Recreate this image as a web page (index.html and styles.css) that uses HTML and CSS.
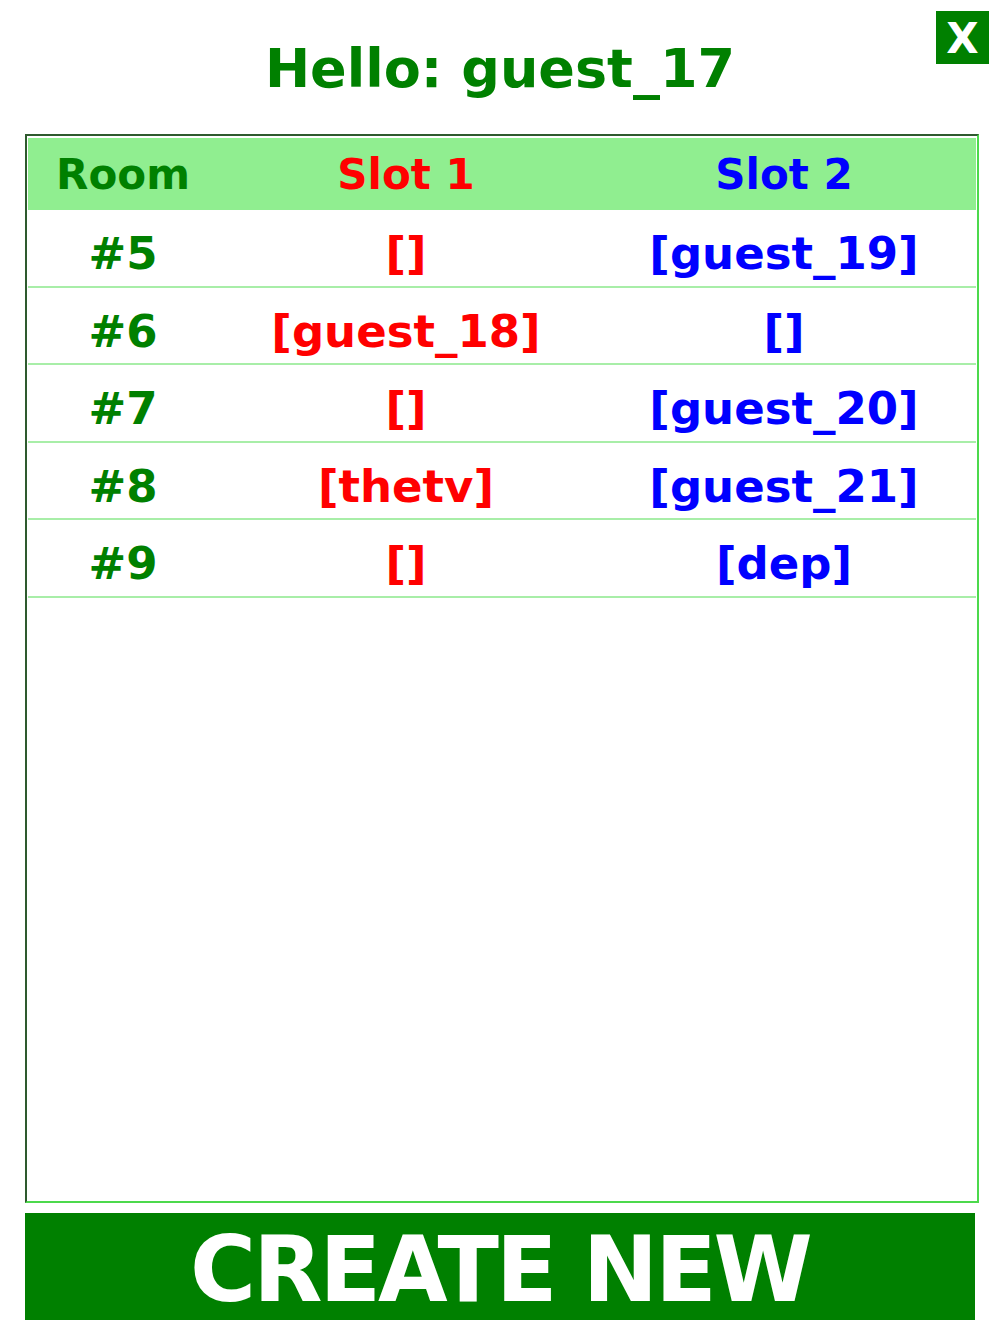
FILE: index.html
```html
<html>
<head>
<meta content="text/html;charset=utf-8" http-equiv="Content-Type" />
<link rel="stylesheet" href="styles.css">
</head>
<body>
<div class="top">
	<h1 class="hello">Hello: guest_17</h1>
	<button class="close">X</button>
</div>
<div class="board">
	<div class="row head">
		<div class="room">Room</div>
		<div class="slot1">Slot 1</div>
		<div class="slot2">Slot 2</div>
	</div>
	<div class="row">
		<div class="room">#5</div>
		<div class="slot1">[]</div>
		<div class="slot2">[guest_19]</div>
	</div>
	<div class="row">
		<div class="room">#6</div>
		<div class="slot1">[guest_18]</div>
		<div class="slot2">[]</div>
	</div>
	<div class="row">
		<div class="room">#7</div>
		<div class="slot1">[]</div>
		<div class="slot2">[guest_20]</div>
	</div>
	<div class="row">
		<div class="room">#8</div>
		<div class="slot1">[thetv]</div>
		<div class="slot2">[guest_21]</div>
	</div>
	<div class="row">
		<div class="room">#9</div>
		<div class="slot1">[]</div>
		<div class="slot2">[dep]</div>
	</div>
</div>
<button class="create">CREATE NEW</button>
</body>
</html>
```

FILE: styles.css
```css
body {
  margin:0;
  padding:0;
  width:1000px;
  background-color:#FFF;
  font-family: "DejaVu Sans", Verdana, sans-serif;
  font-weight:bold;
}

.top {
	position:relative;
	height:134px;
}
.hello {
	margin:0;
	padding-top:38px;
	text-align:center;
	font-size:54px;
	line-height:62px;
	color:#008000;
}
.close {
	position:absolute;
	top:11px;
	left:936px;
	width:53px;
	height:53px;
	margin:0;
	padding:0;
	border:0;
	background-color:#008000;
	color:#FFF;
	font-family: "DejaVu Sans", Verdana, sans-serif;
	font-weight:bold;
	font-size:42px;
	line-height:55px;
}

.board {
	margin-left:25px;
	width:948px;
	height:1063px;
	padding:2px 1px 0 1px;
	border:2px solid;
	border-color:#2e5a2e #4cd94c #4cd94c #2e5a2e;
}
.row {
	display:grid;
	grid-template-columns:190px 376px 380px;
	box-sizing:border-box;
	height:77.5px;
	padding-top:12px;
	border-bottom:2px solid #A8EEA8;
	font-size:45px;
	line-height:64px;
	text-align:center;
}
.row.head {
	height:72px;
	padding-top:0;
	line-height:74px;
	border-bottom:0;
	background-color:#90EE90;
	font-size:42px;
}
.room { color:#008000; }
.slot1 { color:#FF0000; }
.slot2 { color:#0000FF; }

.create {
	display:block;
	margin:10px 0 0 25px;
	width:950px;
	height:107px;
	padding:6px 0 0 0;
	border:0;
	background-color:#008000;
	color:#FFF;
	font-family: "DejaVu Sans", Verdana, sans-serif;
	font-weight:bold;
	font-size:90px;
	line-height:101px;
	letter-spacing:-3px;
}
```
